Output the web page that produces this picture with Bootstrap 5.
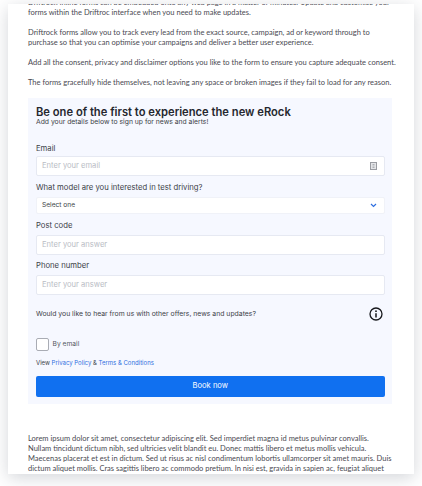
<!DOCTYPE html>
<html lang="en">
<head>
<meta charset="utf-8">
<title>Driftrock forms</title>
<link href="https://cdn.jsdelivr.net/npm/bootstrap@5.3.0/dist/css/bootstrap.min.css" rel="stylesheet">
<style>
html, body { height: 486px; overflow: hidden; background: #fff; }
.sheet { margin: 4px 8px 0; height: 470px; overflow: hidden; background: #fff; box-shadow: 0 4px 16px rgba(40,50,70,.2); padding: 0 20px; }
.sheet-inner { margin-top: -6px; }
.copy { font-family: Lato, sans-serif; font-size: 7.5px; line-height: 10px; color: #4a4a52; margin: 0 0 10px; white-space: nowrap; }
.form-panel { background: #f6f8ff; margin: 0 2px 30px 0; padding: 8px 7.5px 7.5px 8px; font-family: Inter, sans-serif; color: #3c3f47; }
.form-title { font-size: 11.2px; line-height: 12px; font-weight: 600; color: #25272e; margin: 0; white-space: nowrap; }
.form-sub { font-size: 6.8px; line-height: 8px; margin: 0 0 17px; color: #3c3f47; }
.fld-label { font-size: 7.7px; line-height: 11px; display: block; margin: 0 0 2px; }
.fld { height: 20px; background: #fff; border: 1px solid #e6e9f2; border-radius: 2px; padding: 0 7px 0 5px; margin-bottom: 6px; font-size: 7.6px; color: #b9bcc4; }
.fld-select { height: 17px; margin-top: 4px; margin-bottom: 6px; color: #3c3f47; font-size: 6.6px; padding: 0 6.5px 0 5px; border-color: #f0f2f8; }
.fld-label-wide { margin-bottom: 0; }
.fld-next { margin-bottom: 3.5px; }
.fld-tail { margin-bottom: 5.5px; }
.ask-row { margin-top: 12px; padding-right: 1.5px; }
.ask { font-size: 6.85px; line-height: 14px; margin: 0; height: 14px; }
.tick { width: 13px; height: 13px; background: #fff; border: 1px solid #a9acb4; border-radius: 2px; }
.tick-row { margin: 17.5px 0 8px; font-size: 6.7px; color: #55585f; gap: 3.5px; }
.legal { font-size: 6px; line-height: 8px; margin: 0 0 9px; color: #3c3f47; }
.legal a { color: #2f6fe0; text-decoration: none; }
.book { height: 20.5px; font-size: 7.6px; line-height: 1; padding: 0; background: #1070f0; border: 0; border-radius: 2px; }
</style>
</head>
<body>
<div class="sheet">
  <div class="sheet-inner">
    <p class="copy">Driftrock Inline forms can be embedded onto any web page in a matter of minutes. Update and customise your<br>forms within the Driftroc interface when you need to make updates.</p>
    <p class="copy">Driftrock forms allow you to track every lead from the exact source, campaign, ad or keyword through to<br>purchase so that you can optimise your campaigns and deliver a better user experience.</p>
    <p class="copy">Add all the consent, privacy and disclaimer options you like to the form to ensure you capture adequate consent.</p>
    <p class="copy">The forms gracefully hide themselves, not leaving any space or broken images if they fail to load for any reason.</p>

    <form class="form-panel">
      <h1 class="form-title">Be one of the first to experience the new eRock</h1>
      <p class="form-sub">Add your details below to sign up for news and alerts!</p>

      <label class="fld-label">Email</label>
      <div class="fld d-flex align-items-center justify-content-between">
        <span>Enter your email</span>
        <svg width="7" height="8" viewBox="0 0 7 8" aria-hidden="true"><rect x=".5" y=".5" width="6" height="7" fill="#e4e5e8" stroke="#9a9ca2"/><path d="M2.5 2.5h2M2.5 4h2M2.5 5.5h2" stroke="#8b8d93" stroke-width=".6"/></svg>
      </div>

      <label class="fld-label fld-label-wide">What model are you interested in test driving?</label>
      <div class="fld fld-select d-flex align-items-center justify-content-between">
        <span>Select one</span>
        <svg width="7" height="5" viewBox="0 0 7 5" aria-hidden="true"><path d="M1 1l2.5 2.5L6 1" fill="none" stroke="#2f6fe0" stroke-width="1.2"/></svg>
      </div>

      <label class="fld-label fld-next">Post code</label>
      <div class="fld fld-tail d-flex align-items-center">Enter your answer</div>

      <label class="fld-label fld-next">Phone number</label>
      <div class="fld d-flex align-items-center">Enter your answer</div>

      <div class="ask-row d-flex align-items-center justify-content-between">
        <p class="ask">Would you like to hear from us with other offers, news and updates?</p>
        <svg width="14" height="14" viewBox="0 0 14 14" aria-hidden="true"><circle cx="7" cy="7" r="6" fill="none" stroke="#17181c" stroke-width="1.3"/><circle cx="7" cy="4.2" r=".9" fill="#17181c"/><path d="M7 6.2v4.2" stroke="#17181c" stroke-width="1.5"/></svg>
      </div>

      <div class="tick-row d-flex align-items-center">
        <span class="tick"></span>
        <span>By email</span>
      </div>

      <p class="legal">View <a href="#">Privacy Policy</a> &amp; <a href="#">Terms &amp; Conditions</a></p>

      <button type="button" class="btn btn-primary book d-block w-100">Book now</button>
    </form>

    <p class="copy">Lorem ipsum dolor sit amet, consectetur adipiscing elit. Sed imperdiet magna id metus pulvinar convallis.<br>Nullam tincidunt dictum nibh, sed ultricies velit blandit eu. Donec mattis libero et metus mollis vehicula.<br>Maecenas placerat et est in dictum. Sed ut risus ac nisl condimentum lobortis ullamcorper sit amet mauris. Duis<br>dictum aliquet mollis. Cras sagittis libero ac commodo pretium. In nisi est, gravida in sapien ac, feugiat aliquet</p>
  </div>
</div>
</body>
</html>
